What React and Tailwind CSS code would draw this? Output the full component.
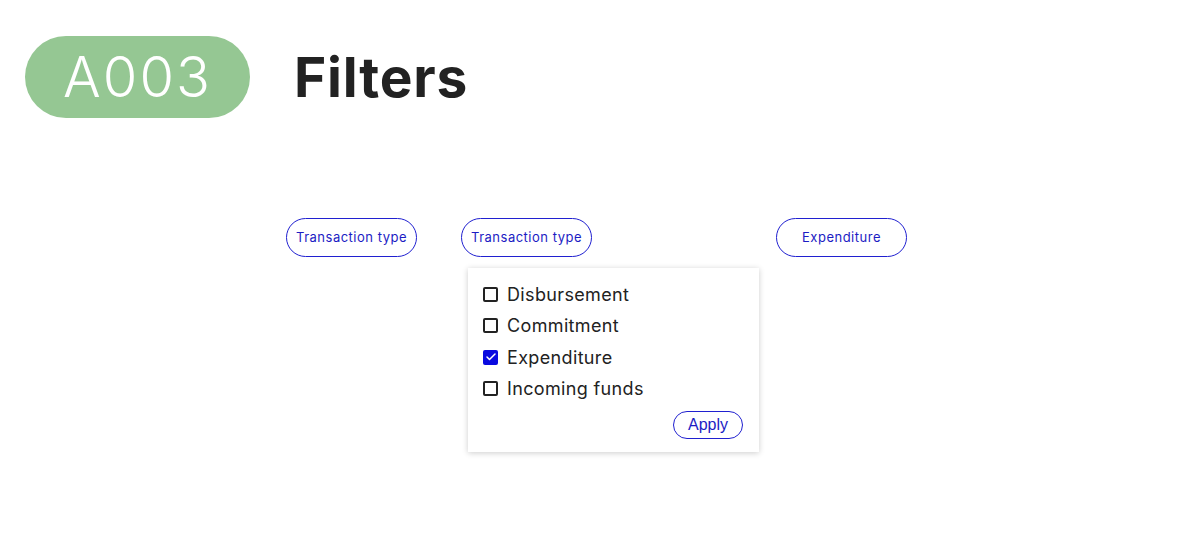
import { Check } from 'lucide-react'

const font = { fontFamily: 'Inter, "Noto Sans", sans-serif' }

const Pill = ({ label, className = '' }) => (
    <div className={`flex items-center justify-center w-[131px] h-[39px] rounded-full border border-[#2020d0] text-[13px] tracking-[0.5px] text-[#1c1cc4] ${className}`}>
        {label}
    </div>
)

const Option = ({ label, checked }) => (
    <div className="flex items-center h-[31.3px]">
        {checked ? (
            <span className="flex items-center justify-center w-[15px] h-[15px] rounded-[2px] bg-[#0a0ae0]">
                <Check className="w-[12px] h-[12px] text-white" strokeWidth={3} />
            </span>
        ) : (
            <span className="w-[15px] h-[15px] rounded-[2px] border-2 border-[#222]" />
        )}
        <span className="ml-[9px] text-[18px] tracking-[0.35px] text-[#222]">{label}</span>
    </div>
)

export default function App() {
    const options = [
        { label: 'Disbursement', checked: false },
        { label: 'Commitment', checked: false },
        { label: 'Expenditure', checked: true },
        { label: 'Incoming funds', checked: false },
    ]

    return (
        <div className="w-[1193px] h-[555px] pt-[36px] bg-white overflow-hidden" style={font}>

            {/* Header */}
            <div className="flex items-center h-[82px] pl-[25px]">
                <div className="flex items-center justify-center w-[225px] h-[82px] rounded-full bg-[#95c793] text-white text-[56px] font-light tracking-[2px]">
                    A003
                </div>
                <h1 className="ml-[44px] text-[55px] font-bold tracking-[0.8px] text-[#222]">Filters</h1>
            </div>

            {/* Filter row */}
            <div className="flex mt-[100px] ml-[286px]">
                <Pill label="Transaction type" />
                <div className="relative ml-[44px]">
                    <Pill label="Transaction type" />
                    <div className="absolute left-[7px] top-[50px] w-[291px] h-[184px] bg-white shadow-[0_1px_6px_rgba(0,0,0,0.2)] pl-[15px] pt-[11px] pr-[16px]">
                        {options.map((o) => (
                            <Option key={o.label} label={o.label} checked={o.checked} />
                        ))}
                        <div className="flex justify-end mt-[7px]">
                            <button
                                className="w-[70px] h-[28px] rounded-full border border-[#2020d0] text-[16px] text-[#1c1cc4]"
                                style={{ fontFamily: '"Liberation Sans", Arial, sans-serif' }}
                            >
                                Apply
                            </button>
                        </div>
                    </div>
                </div>
                <Pill label="Expenditure" className="ml-[184px]" />
            </div>

        </div>
    )
}
